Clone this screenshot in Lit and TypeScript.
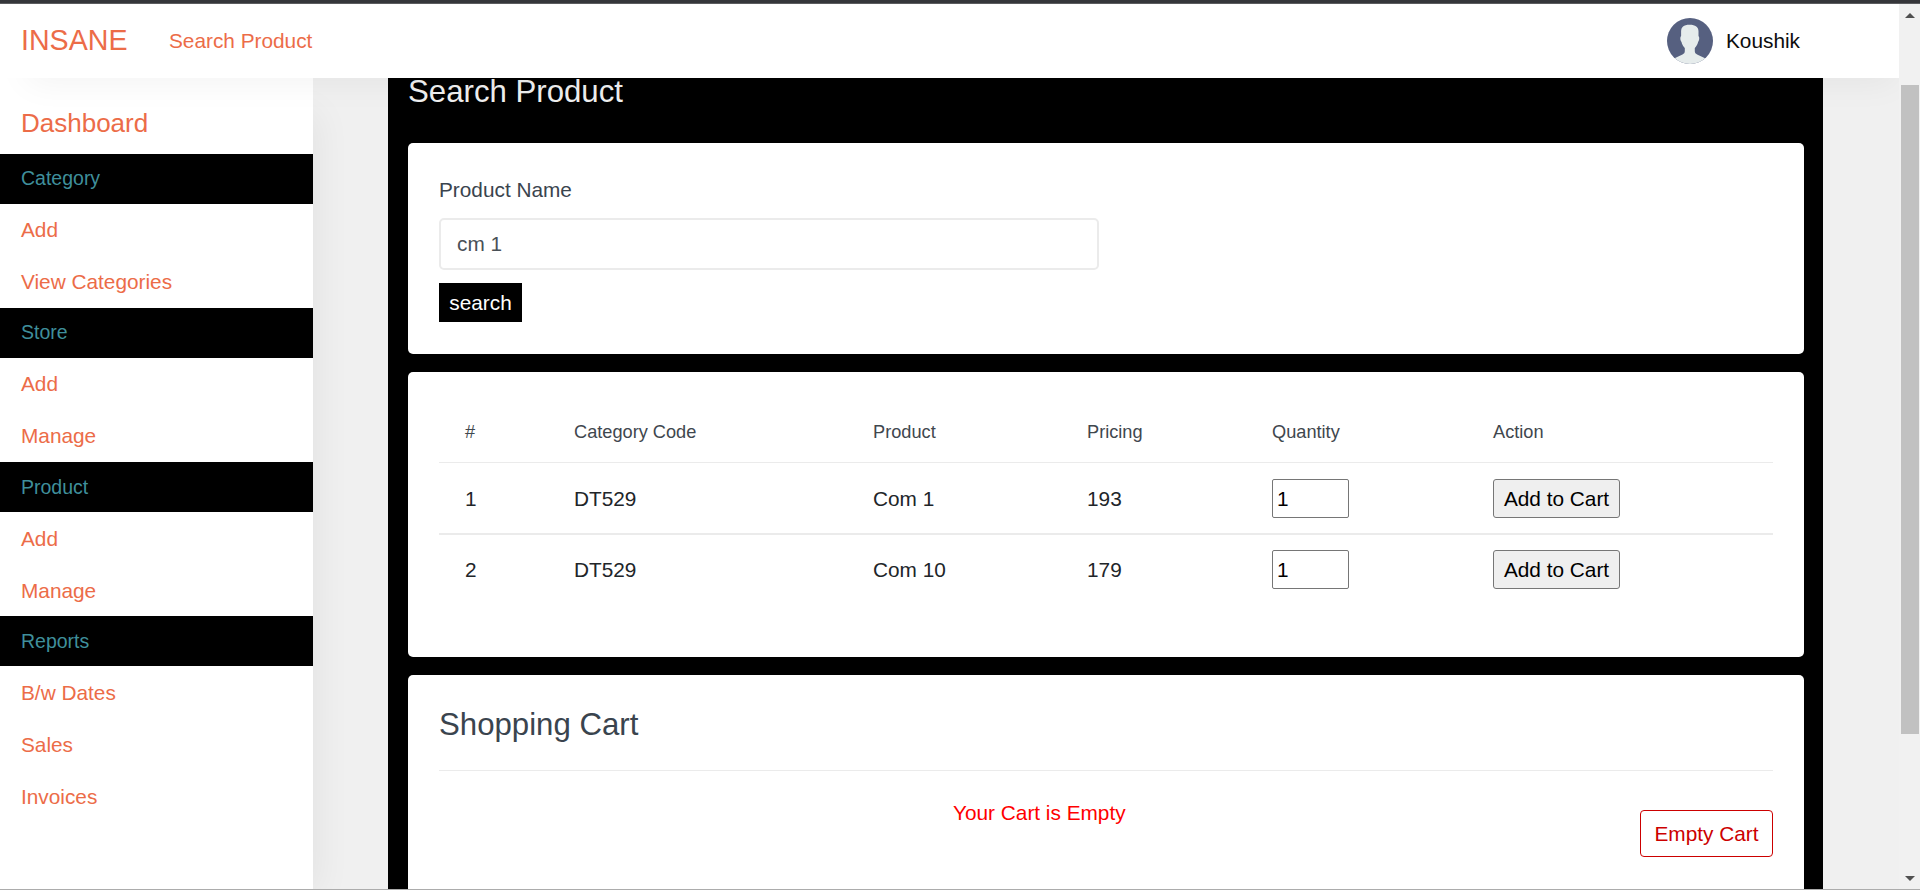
import { LitElement, html, css } from "lit";
import { customElement } from "lit/decorators.js";

const NAV = [
  { title: "Category", items: ["Add", "View Categories"] },
  { title: "Store", items: ["Add", "Manage"] },
  { title: "Product", items: ["Add", "Manage"] },
  { title: "Reports", items: ["B/w Dates", "Sales", "Invoices"] },
];

const ROWS = [
  { n: 1, code: "DT529", product: "Com 1", price: 193, qty: 1 },
  { n: 2, code: "DT529", product: "Com 10", price: 179, qty: 1 },
];

@customElement("app-root")
export class AppRoot extends LitElement {
  static styles = css`
    :host {
      display: flex;
      flex-direction: column;
      height: 890px;
      overflow: hidden;
      box-sizing: border-box;
      border-bottom: 1px solid #acacac;
      background: #f0f0f0;
      font-family: "Liberation Sans", Arial, sans-serif;
      font-size: 20.8px;
      line-height: 24px;
      color: #212529;
    }
    * { box-sizing: border-box; }
    .strip { flex: none; height: 4px; background: #35363a; border-bottom: 1px solid #5b5c5f; }
    .window { flex: 1; display: flex; min-height: 0; }
    .page { flex: 1; display: flex; flex-direction: column; min-width: 0; overflow: hidden; }
    .header {
      flex: none;
      height: 74px;
      display: flex;
      align-items: center;
      padding: 0 99px 0 21px;
      background: #fff;
      z-index: 2;
      color: #ec6c48;
      box-shadow: 12px 20px 34px -15px rgba(0, 0, 0, 0.05);
    }
    .brand { width: 148px; padding-bottom: 2px; font-size: 28.6px; line-height: 34px; }
    .user { margin-left: auto; display: flex; align-items: center; gap: 13px; color: #0d0d0d; }
    .avatar { display: block; width: 46px; height: 46px; }
    .body { flex: 1; display: flex; min-height: 0; }
    .sidebar {
      flex: none;
      width: 313px;
      padding-top: 14px;
      background: #fff;
      color: #ec6c48;
      z-index: 1;
      box-shadow: 20px 19px 34px -15px rgba(0, 0, 0, 0.06);
    }
    .row { height: 52px; padding-left: 21px; display: flex; align-items: center; }
    .dash { height: 62px; font-size: 26px; }
    .group { height: 50px; font-size: 19.5px; background: #000; color: #3f8f9b; padding-bottom: 2px; }
    .late .row { padding-top: 2px; }
    .late .group { padding-top: 0; padding-bottom: 0; }
    .main { width: 1435px; margin-left: 75px; padding: 0 19px 0 20px; background: #000; overflow: hidden; z-index: 1; }
    .title { height: 65px; margin: 0; font-size: 31.2px; line-height: 28px; font-weight: 400; color: #efefef; }
    .card { background: #fff; border-radius: 5px; padding: 0 31px; margin-bottom: 18px; color: #3a444e; }
    .search { height: 211px; padding-top: 35px; }
    .label { display: block; }
    .field {
      display: block;
      width: 660px;
      height: 52px;
      margin: 16px 0 13px;
      padding: 0 16px;
      border: 2px solid #ebebeb;
      border-radius: 5px;
      font: inherit;
      color: #495057;
      background: #fff;
    }
    .btn-search { display: block; width: 83px; height: 39px; padding: 0; border: 0; background: #000; color: #fff; font: inherit; }
    .list { height: 285px; padding-top: 25px; }
    .tr { display: grid; grid-template-columns: 109px 299px 214px 185px 221px 1fr; align-items: center; padding-left: 26px; height: 70px; color: #212529; }
    .tr span { padding-top: 2px; }
    .tr + .tr { border-top: 2px solid #ebebeb; }
    .tr.th { height: 66px; padding-top: 3px; font-size: 18.2px; color: #3f474e; border-bottom: 1px solid #ebebeb; }
    .tr.th + .tr { border-top: 0; }
    .qty { width: 77px; height: 39px; padding: 1px 4px 0; border: 1px solid #767676; border-radius: 2px; font: inherit; color: #000; background: #fff; }
    .add { width: 127px; height: 39px; padding: 1px 0 0; border: 1px solid #767676; border-radius: 3px; background: #efefef; color: #000; font: inherit; }
    .cart { height: 300px; padding-top: 32px; }
    .cart-title { height: 64px; margin: 0; border-bottom: 1px solid #ebebeb; font-size: 31.2px; line-height: 36px; font-weight: 400; }
    .cart-body { display: grid; grid-template-columns: 1201px 133px; }
    .empty { padding: 30px 0 0 514px; color: #f00; }
    .btn-empty { margin-top: 39px; height: 47px; padding: 0; border: 1px solid #c00; border-radius: 4px; background: #fff; color: #c00; font: inherit; }
    .scroll { flex: none; width: 21px; background: #f1f1f1; padding: 9px 1px 8px 2px; display: flex; flex-direction: column; align-items: center; }
    .arrow { display: block; width: 10px; height: 5px; }
    .thumb { width: 18px; height: 649px; margin: 67px 0 auto; background: #c1c1c1; }
  `;

  render() {
    return html`
      <div class="strip"></div>
      <div class="window">
        <div class="page">
          <header class="header">
            <div class="brand">INSANE</div>
            <div>Search Product</div>
            <div class="user">
              <svg class="avatar" viewBox="0 0 46 46">
                <defs><clipPath id="disc"><circle cx="23" cy="23" r="23" /></clipPath></defs>
                <g clip-path="url(#disc)">
                  <rect width="46" height="46" fill="#566080" />
                  <path fill="#e6ecec" d="M22.500 6.700c6 0 9 2.300 9 6.800v4.800c1.200.6.900 4.500-.4 5.600-.5 2.600-1.800 4.300-3.300 6.100v3.200c0 1.600.8 2.400 2.300 3.200l8.500 4.200V46H7v-5.400l8.500-4.200c1.500-.8 2.300-1.600 2.300-3.200V30c-1.500-1.800-2.800-3.500-3.300-6.100-1.300-1.100-1.600-5-.4-5.600v-4.800c0-4.500 2.400-6.800 8.400-6.800z" />
                </g>
              </svg>
              <span>Koushik</span>
            </div>
          </header>
          <div class="body">
            <nav class="sidebar">
              <div class="row dash">Dashboard</div>
              ${NAV.map(
                (g, k) => html`
                  <div class=${k > 1 ? "late" : "early"}>
                    <div class="row group">${g.title}</div>
                    ${g.items.map((i) => html`<div class="row">${i}</div>`)}
                  </div>
                `
              )}
            </nav>
            <main class="main">
              <h2 class="title">Search Product</h2>
              <section class="card search">
                <label class="label">Product Name</label>
                <input class="field" .value=${"cm 1"} />
                <button class="btn-search">search</button>
              </section>
              <section class="card list">
                <div class="tr th">
                  <span>#</span><span>Category Code</span><span>Product</span>
                  <span>Pricing</span><span>Quantity</span><span>Action</span>
                </div>
                ${ROWS.map(
                  (r) => html`
                    <div class="tr">
                      <span>${r.n}</span><span>${r.code}</span><span>${r.product}</span>
                      <span>${r.price}</span>
                      <input class="qty" .value=${String(r.qty)} />
                      <button class="add">Add to Cart</button>
                    </div>
                  `
                )}
              </section>
              <section class="card cart">
                <h2 class="cart-title">Shopping Cart</h2>
                <div class="cart-body">
                  <div class="empty">Your Cart is Empty</div>
                  <button class="btn-empty">Empty Cart</button>
                </div>
              </section>
            </main>
          </div>
        </div>
        <div class="scroll">
          <svg class="arrow" viewBox="0 0 10 5"><path d="M0 5L5 0l5 5z" fill="#505050" /></svg>
          <div class="thumb"></div>
          <svg class="arrow" viewBox="0 0 10 5"><path d="M0 0l5 5 5-5z" fill="#505050" /></svg>
        </div>
      </div>
    `;
  }
}
